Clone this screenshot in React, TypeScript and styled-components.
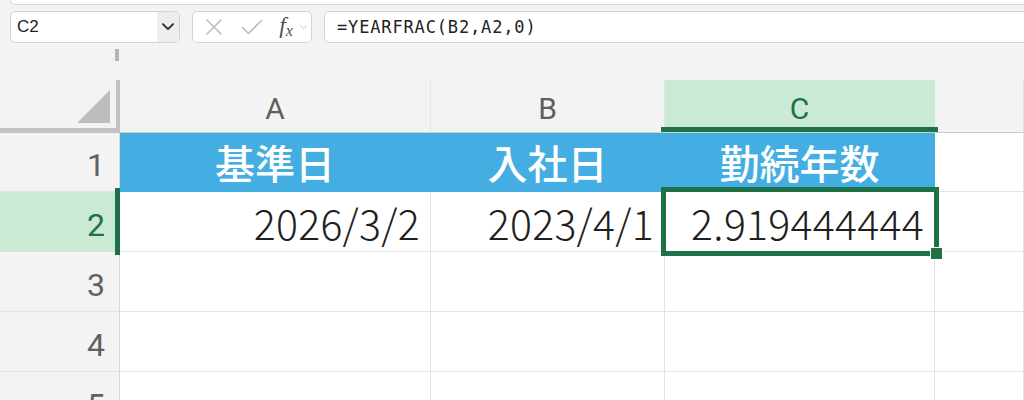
import React from "react";
import styled, { createGlobalStyle } from "styled-components";

const GREEN = "#1e7145";
const GRID = "#e3e3e3";
const BAND = "#44aee2";

const Global = createGlobalStyle`
  html, body { margin: 0; padding: 0; background: #f3f3f3; overflow: hidden; }
  #root { width: 1024px; height: 400px; overflow: hidden; }
`;

const Page = styled.div`
  width: 1024px;
  height: 400px;
  overflow: hidden;
  display: flex;
  flex-direction: column;
  background: #f3f3f3;
  font-family: "Roboto", "Liberation Sans", sans-serif;
`;

const RibbonEdge = styled.div`
  height: 5px;
  margin-left: 10px;
  margin-right: -20px;
  background: #ffffff;
  border: 1px solid #d6d6d6;
  border-top: none;
  border-radius: 0 0 8px 8px;
  box-sizing: border-box;
  flex-shrink: 0;
`;

const FormulaBar = styled.div`
  display: flex;
  align-items: stretch;
  gap: 12px;
  height: 32px;
  margin-top: 6px;
  padding-left: 10px;
  margin-right: -40px;
  flex-shrink: 0;
`;

const Box = styled.div`
  background: #ffffff;
  border: 1px solid #d4d4d4;
  border-radius: 5px;
  box-sizing: border-box;
  display: flex;
  align-items: center;
  overflow: hidden;
`;

const NameBox = styled(Box)`
  width: 170px;
`;

const NameText = styled.div`
  flex: 1;
  padding-left: 6px;
  font-family: "Liberation Sans", Arial, sans-serif;
  font-size: 17px;
  color: #222;
`;

const DropButton = styled.div`
  width: 22px;
  align-self: stretch;
  background: #ededed;
  display: flex;
  align-items: center;
  justify-content: center;
`;

const FxBox = styled(Box)`
  width: 120px;
  padding: 0 0 0 10px;
`;

const IconSlot = styled.div<{ $w: number }>`
  width: ${(p) => p.$w}px;
  display: flex;
  align-items: center;
  justify-content: center;
`;

const FxText = styled.span`
  font-family: "Liberation Serif", "DejaVu Serif", serif;
  font-style: italic;
  font-size: 23px;
  color: #505050;
  line-height: 1;
  margin-top: -2px;
  & > sub {
    font-size: 16px;
    vertical-align: -3px;
    margin-left: 0px;
  }
`;

const FormulaInput = styled(Box)`
  flex: 1;
  padding-left: 12px;
  font-family: "DejaVu Sans Mono", "Liberation Mono", monospace;
  font-size: 17px;
  letter-spacing: 0.85px;
  color: #222;
`;

const Spacer = styled.div`
  height: 37px;
  flex-shrink: 0;
  position: relative;
`;

const SplitHandle = styled.div`
  position: absolute;
  left: 115px;
  top: 6px;
  width: 4px;
  height: 12px;
  background: #b4b4b4;
`;

const Sheet = styled.div`
  position: relative;
  display: grid;
  grid-template-columns: 120px 311px 234px 270px 1fr;
  grid-template-rows: 53px 59px 60px 60px 60px 60px;
  flex: 1;
  min-height: 0;
`;

const Corner = styled.div`
  background: #f3f3f3;
  border-right: 5px solid #c2c2c2;
  border-bottom: 5px solid #c2c2c2;
  box-sizing: border-box;
  position: relative;
  margin-right: -1px;
`;

const CornerTriangle = styled.div`
  position: absolute;
  right: 6px;
  bottom: 5px;
  width: 0;
  height: 0;
  border-left: 33px solid transparent;
  border-bottom: 33px solid #bdbdbd;
`;

const ColHeader = styled.div<{ $active?: boolean }>`
  position: relative;
  background: ${(p) => (p.$active ? "#caead6" : "#f3f3f3")};
  border-right: 1px solid ${(p) => (p.$active ? "#caead6" : "#e4e4e4")};
  border-bottom: 1px solid #cdcdcd;
  box-sizing: border-box;
  display: flex;
  align-items: center;
  justify-content: center;
  padding-top: 5px;
  font-size: 30px;
  color: ${(p) => (p.$active ? GREEN : "#5f5f5f")};
  &::after {
    content: "";
    display: ${(p) => (p.$active ? "block" : "none")};
    position: absolute;
    left: -4px;
    right: -4px;
    bottom: 0;
    height: 5px;
    background: ${GREEN};
    z-index: 2;
  }
`;

const RowHeader = styled.div<{ $active?: boolean }>`
  position: relative;
  background: ${(p) => (p.$active ? "#caead6" : "#f3f3f3")};
  border-right: 1px solid #d6d6d6;
  border-bottom: 1px solid ${(p) => (p.$active ? "#caead6" : "#e2e2e2")};
  box-sizing: border-box;
  display: flex;
  align-items: center;
  justify-content: flex-end;
  padding: 6px 14px 0 0;
  font-size: 32px;
  color: ${(p) => (p.$active ? GREEN : "#616161")};
  &::after {
    content: "";
    display: ${(p) => (p.$active ? "block" : "none")};
    position: absolute;
    right: -1px;
    top: -4px;
    bottom: -4px;
    width: 5px;
    background: ${GREEN};
    z-index: 2;
  }
`;

const Cell = styled.div<{ $band?: boolean }>`
  background: ${(p) => (p.$band ? BAND : "#ffffff")};
  border-right: 1px solid ${(p) => (p.$band ? BAND : GRID)};
  border-bottom: 1px solid ${(p) => (p.$band ? BAND : GRID)};
  box-sizing: border-box;
  display: flex;
  align-items: center;
  overflow: hidden;
  white-space: nowrap;
`;

const TitleCell = styled(Cell)`
  justify-content: center;
  font-family: "Noto Sans CJK JP", "Noto Sans", sans-serif;
  font-weight: 500;
  font-size: 40px;
  color: #ffffff;
`;

const ValueCell = styled(Cell)`
  justify-content: flex-end;
  padding-right: 10px;
  font-family: "Noto Sans CJK JP", "Noto Sans", sans-serif;
  font-weight: 200;
  font-size: 41px;
  letter-spacing: 0.3px;
  color: #1f1f1f;
`;

const Selection = styled.div`
  position: absolute;
  left: 661px;
  top: 107px;
  width: 278px;
  height: 69px;
  border: 5px solid ${GREEN};
  box-sizing: border-box;
  z-index: 3;
  pointer-events: none;
`;

const FillHandle = styled.div`
  position: absolute;
  left: 930px;
  top: 167px;
  width: 11px;
  height: 11px;
  background: ${GREEN};
  border: 1px solid #ffffff;
  z-index: 4;
`;

const Chevron = ({ color = "#333", size = 12, sw = 2 }: { color?: string; size?: number; sw?: number }) => (
  <svg width={size} height={size * 0.6} viewBox="0 0 12 7" fill="none">
    <path d="M1 1l5 5 5-5" stroke={color} strokeWidth={sw} strokeLinecap="round" strokeLinejoin="round" />
  </svg>
);

const CrossIcon = () => (
  <svg width="18" height="16" viewBox="0 0 18 16" fill="none">
    <path d="M2 1l14 14M16 1L2 15" stroke="#bdbdbd" strokeWidth="1.6" strokeLinecap="round" />
  </svg>
);

const CheckIcon = () => (
  <svg width="22" height="16" viewBox="0 0 22 16" fill="none">
    <path d="M1.5 8.5l6 6L20.5 1.5" stroke="#bdbdbd" strokeWidth="1.6" strokeLinecap="round" strokeLinejoin="round" />
  </svg>
);

const cols = ["A", "B", "C", ""];

export default function App() {
  return (
    <Page>
      <Global />
      <RibbonEdge />
      <FormulaBar>
        <NameBox>
          <NameText>C2</NameText>
          <DropButton>
            <Chevron />
          </DropButton>
        </NameBox>
        <FxBox>
          <IconSlot $w={22}>
            <CrossIcon />
          </IconSlot>
          <IconSlot $w={14} />
          <IconSlot $w={26}>
            <CheckIcon />
          </IconSlot>
          <IconSlot $w={10} />
          <IconSlot $w={22}>
            <FxText>
              f<sub>x</sub>
            </FxText>
          </IconSlot>
          <IconSlot $w={12}>
            <Chevron color="#bbb" size={7} sw={1.4} />
          </IconSlot>
        </FxBox>
        <FormulaInput>=YEARFRAC(B2,A2,0)</FormulaInput>
      </FormulaBar>
      <Spacer>
        <SplitHandle />
      </Spacer>
      <Sheet>
        <Corner>
          <CornerTriangle />
        </Corner>
        {cols.map((c, i) => (
          <ColHeader key={i} $active={c === "C"}>
            {c}
          </ColHeader>
        ))}

        <RowHeader>1</RowHeader>
        <TitleCell $band>基準日</TitleCell>
        <TitleCell $band>入社日</TitleCell>
        <TitleCell $band>勤続年数</TitleCell>
        <Cell />

        <RowHeader $active>2</RowHeader>
        <ValueCell>2026/3/2</ValueCell>
        <ValueCell>2023/4/1</ValueCell>
        <ValueCell>2.919444444</ValueCell>
        <Cell />

        {[3, 4, 5].map((r) => (
          <React.Fragment key={r}>
            <RowHeader>{r}</RowHeader>
            <Cell />
            <Cell />
            <Cell />
            <Cell />
          </React.Fragment>
        ))}

        <Selection />
        <FillHandle />
      </Sheet>
    </Page>
  );
}
